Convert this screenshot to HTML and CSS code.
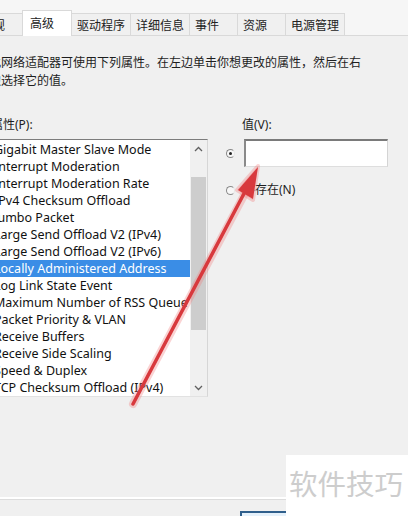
FILE: index.html
```html
<!DOCTYPE html>
<html lang="zh">
<head>
<meta charset="utf-8">
<link rel="stylesheet" href="styles.css">
</head>
<body>
<div class="window">
  <div class="tabstrip">
    <div class="tab tab-first">常规</div>
    <div class="tab tab-active">高级</div>
    <div class="tab">驱动程序</div>
    <div class="tab">详细信息</div>
    <div class="tab">事件</div>
    <div class="tab">资源</div>
    <div class="tab">电源管理</div>
  </div>
  <div class="panel">
    <p class="desc">此网络适配器可使用下列属性。在左边单击你想更改的属性，然后在右边选择它的值。</p>
    <div class="columns">
      <div class="col-left">
        <div class="label">属性(P):</div>
        <div class="listbox">
          <ul class="items">
            <li>Gigabit Master Slave Mode</li>
            <li>Interrupt Moderation</li>
            <li>Interrupt Moderation Rate</li>
            <li>IPv4 Checksum Offload</li>
            <li>Jumbo Packet</li>
            <li>Large Send Offload V2 (IPv4)</li>
            <li>Large Send Offload V2 (IPv6)</li>
            <li class="selected">Locally Administered Address</li>
            <li>Log Link State Event</li>
            <li>Maximum Number of RSS Queue</li>
            <li>Packet Priority &amp; VLAN</li>
            <li>Receive Buffers</li>
            <li>Receive Side Scaling</li>
            <li>Speed &amp; Duplex</li>
            <li>TCP Checksum Offload (IPv4)</li>
          </ul>
          <div class="scrollbar">
            <div class="sb-btn"><svg width="9" height="6" viewBox="0 0 9 6"><polyline points="1,5 4.5,1.5 8,5" fill="none" stroke="#606060" stroke-width="1.3"/></svg></div>
            <div class="sb-track"><div class="sb-thumb"></div></div>
            <div class="sb-btn"><svg width="9" height="6" viewBox="0 0 9 6"><polyline points="1,1 4.5,4.5 8,1" fill="none" stroke="#606060" stroke-width="1.3"/></svg></div>
          </div>
        </div>
      </div>
      <div class="col-right">
        <div class="label label-value">值(V):</div>
        <div class="opt-row">
          <span class="radio radio-on"></span>
          <div class="textbox"></div>
        </div>
        <div class="opt-row opt-row-2">
          <span class="radio"></span>
          <span class="opt-text">不存在(N)</span>
        </div>
      </div>
    </div>
  </div>
  <div class="footer">
    <div class="btn"></div>
  </div>

  <svg class="arrow" width="408" height="516" viewBox="0 0 408 516">
    <line x1="133" y1="404" x2="250" y2="184" stroke="rgba(240,130,130,0.35)" stroke-width="8" stroke-linecap="round"/>
    <polygon points="258,166 237,190 253,200" fill="rgba(240,130,130,0.35)" stroke="rgba(240,130,130,0.35)" stroke-width="4" stroke-linejoin="round"/>
    <line x1="133" y1="404" x2="248" y2="186" stroke="#d8393d" stroke-width="3.5" stroke-linecap="round"/>
    <polygon points="258,167 238,190 253,199" fill="#d8393d"/>
  </svg>

  <div class="watermark">软件技巧</div>
</div>
</body>
</html>
```

FILE: styles.css
```css
* { box-sizing: border-box; }
html, body { margin: 0; padding: 0; }
body {
  background: #f0f0f0;
  font-family: "Noto Sans", "Noto Sans CJK SC", sans-serif;
  color: #1a1a1a;
}
.window {
  position: relative;
  width: 408px;
  height: 516px;
  overflow: hidden;
  background: #f0f0f0;
}

/* tabs */
.tabstrip {
  display: flex;
  align-items: flex-end;
  height: 36px;
  background: #f6f6f6;
  border-bottom: 1px solid #d9d9d9;
  font-family: "Noto Sans CJK SC", sans-serif;
  font-size: 12px;
}
.tab {
  height: 22px;
  min-width: 48px;
  padding: 0 5px;
  line-height: 21px;
  background: #f0f0f0;
  border: 1px solid #d9d9d9;
  border-bottom: none;
  border-left: none;
  color: #222;
}
.tab-first {
  width: 46px;
  min-width: 46px;
  margin-left: -24px;
  border-right: none;
}
.tab-active {
  height: 26px;
  width: 50px;
  padding: 0 7px;
  line-height: 24px;
  background: #ffffff;
  border-left: 1px solid #d9d9d9;
  margin-bottom: -1px;
  position: relative;
  z-index: 1;
}

/* panel */
.panel {
  height: 463px;
  padding: 17px 0 0 0;
  margin-left: -11px;
  border-bottom: 2px solid #ffffff;
}
.desc {
  margin: 0;
  width: 378px;
  font-family: "Noto Sans CJK SC", sans-serif;
  font-size: 12px;
  line-height: 18px;
  color: #1e1e1e;
}
.columns {
  display: flex;
  margin-top: 27px;
}
.label {
  font-family: "Noto Sans", "Noto Sans CJK SC", sans-serif;
  font-size: 12px;
  line-height: 18px;
  height: 18px;
  color: #1e1e1e;
}
.col-left {
  width: 217px;
  margin-left: 2px;
}
.listbox {
  margin-top: 5px;
  height: 258px;
  display: flex;
  background: #ffffff;
  border-top: 1px solid #7c7c7c;
  border-right: 1px solid #d6d6d6;
  border-bottom: 1px solid #e2e2e2;
}
.items {
  list-style: none;
  margin: 0;
  padding: 1px 0 0 0;
  flex: 1;
  overflow: hidden;
  font-size: 12.5px;
}
.items li {
  height: 17px;
  line-height: 17px;
  padding-left: 3px;
  white-space: nowrap;
  color: #111111;
}
.items li.selected {
  background: #3a8de6;
  color: #ffffff;
}
.scrollbar {
  width: 17px;
  display: flex;
  flex-direction: column;
  background: #f0f0f0;
}
.sb-btn {
  height: 17px;
  display: flex;
  align-items: center;
  justify-content: center;
}
.sb-track {
  flex: 1;
  padding: 20px 1px 0 1px;
}
.sb-thumb {
  height: 153px;
  background: #cdcdcd;
}

/* right */
.col-right {
  margin-left: 18px;
}
.label-value {
  padding-left: 16px;
}
.opt-row {
  display: flex;
  align-items: center;
  margin-top: 5px;
  gap: 9px;
}
.opt-row-2 {
  margin-top: 14px;
  height: 18px;
  gap: 8px;
}
.radio {
  width: 9px;
  height: 9px;
  border-radius: 50%;
  border: 1px solid #8a8a8a;
  border-right-color: #e6e6e6;
  background: #f7f7f7;
  display: flex;
  align-items: center;
  justify-content: center;
}
.radio-on::after {
  content: "";
  width: 3px;
  height: 3px;
  border-radius: 50%;
  background: #222;
}
.textbox {
  width: 144px;
  height: 28px;
  background: #ffffff;
  border-top: 2px solid #7a7a7a;
  border-left: 2px solid #8a8a8a;
  border-right: 1px solid #d4d4d4;
  border-bottom: 1px solid #dedede;
}
.opt-text {
  font-size: 12px;
  line-height: 18px;
  color: #1e1e1e;
}

/* footer */
.footer {
  border-top: 1px solid #dcdcdc;
  height: 15px;
  padding: 11px 0 0 240px;
}
.btn {
  width: 76px;
  height: 24px;
  border: 2px solid #2f5f8c;
  background: #e5f1fb;
}

/* overlays */
.arrow {
  position: absolute;
  left: 0;
  top: 0;
  pointer-events: none;
}
.watermark {
  position: absolute;
  right: 0;
  bottom: 0;
  width: 122px;
  height: 61px;
  background: #ffffff;
  padding-left: 3px;
  font-family: "Noto Sans CJK SC", sans-serif;
  font-size: 28.5px;
  line-height: 56px;
  color: #cdcdcd;
}
```
